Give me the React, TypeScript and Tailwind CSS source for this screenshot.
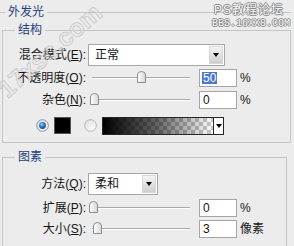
import React from "react";

// Photoshop "外发光" layer style panel (XP look)

const Key = ({ c }: { c: string }) => <span className="underline underline-offset-[1px]">{c}</span>;

const Label = ({ name, k }: { name: string; k: string }) => (
  <div className="w-[83px] shrink-0 flex justify-end whitespace-nowrap">
    <span>
      {name}(<Key c={k} />):
    </span>
  </div>
);

const Arrow = () => (
  <div className="w-0 h-0 border-x-[3px] border-t-[4px] border-x-transparent border-t-black" />
);

const Dropdown = ({ value, width }: { value: string; width: string }) => (
  <div className={`${width} h-[22px] ml-[2px] shrink-0 flex items-center border border-[#a7a6aa] bg-white`}>
    <span className="pl-[6px]">{value}</span>
    <div className="ml-auto mr-[1px] w-[14px] h-[18px] flex items-center justify-center bg-linear-to-b from-[#f4f4f4] to-[#cfcfcf] border border-[#d8d8d8]">
      <Arrow />
    </div>
  </div>
);

const Slider = ({ at }: { at: number }) => (
  <div className="relative w-[104px] h-[14px] ml-[2px] shrink-0">
    <div className="absolute left-[4px] w-[98px] top-[6px] h-[2px] border-t border-t-[#a9a9a9] border-b border-b-white" />
    <svg style={{ left: at }} className="absolute top-0" width="9" height="12" viewBox="0 0 9 12">
      <defs>
        <linearGradient id="thumb" x1="0" y1="0" x2="1" y2="0">
          <stop offset="0" stopColor="#ffffff" />
          <stop offset="1" stopColor="#d6d6d6" />
        </linearGradient>
      </defs>
      <path d="M0.5 4 Q0.5 0.5 4.5 0.5 Q8.5 0.5 8.5 4 V11.5 H0.5 Z" fill="url(#thumb)" stroke="#8c8c8c" />
    </svg>
  </div>
);

const NumBox = ({ value, selected }: { value: string; selected?: boolean }) => (
  <div className="ml-[7px] w-[38px] h-[18px] shrink-0 flex items-center border border-[#a5a5a5] bg-white pl-[2px]">
    <span className={selected ? "bg-[#4a79cc] text-white px-[1px]" : "px-[1px]"}>{value}</span>
  </div>
);

const SliderRow = ({ name, k, at, value, unit, selected, className }: {
  name: string; k: string; at: number; value: string; unit: string; selected?: boolean; className: string;
}) => (
  <div className={`flex items-center h-[18px] ${className}`}>
    <Label name={name} k={k} />
    <Slider at={at} />
    <NumBox value={value} selected={selected} />
    <span className="ml-[3px]">{unit}</span>
  </div>
);

const Radio = ({ on }: { on?: boolean }) => (
  <svg width="13" height="13" viewBox="0 0 13 13" className="shrink-0">
    <defs>
      <radialGradient id="dot" cx="0.4" cy="0.35" r="0.7">
        <stop offset="0" stopColor="#9fd0f5" />
        <stop offset="0.5" stopColor="#2f78c0" />
        <stop offset="1" stopColor="#14477f" />
      </radialGradient>
      <linearGradient id="rfill" x1="0" y1="0" x2="1" y2="1">
        <stop offset="0" stopColor="#dcdcdc" />
        <stop offset="1" stopColor="#ffffff" />
      </linearGradient>
    </defs>
    <circle cx="6.5" cy="6.5" r="5.8" fill="url(#rfill)" stroke={on ? "#7b93ab" : "#b4b4b4"} />
    {on && <circle cx="6.5" cy="6.5" r="3.4" fill="url(#dot)" />}
  </svg>
);

export default function App() {
  return (
    <div className="relative w-[294px] h-[246px] overflow-hidden bg-[#ececec] pt-[6px] text-[12px] leading-[12px] text-[#141414] font-['Liberation_Sans','Noto_Sans_CJK_SC',sans-serif]">
      <fieldset className="mr-[4px] border-t border-t-[#c4c4c4] p-0">
        <legend className="ml-[5px] px-[3px] text-[#23407e] leading-[12px]">外发光</legend>

        {/* 结构 */}
        <fieldset className="ml-[2px] mt-[6px] w-[289px] border border-[#c4c4c4] p-0 pb-[8px]">
          <legend className="ml-[12px] px-[3px] text-[#23407e] leading-[12px]">结构</legend>

          <div className="flex items-center h-[22px] mt-[8px]">
            <Label name="混合模式" k="E" />
            <Dropdown value="正常" width="w-[137px]" />
          </div>

          <SliderRow className="mt-[3px]" name="不透明度" k="O" at={49} value="50" unit="%" selected />
          <SliderRow className="mt-[4px]" name="杂色" k="N" at={2} value="0" unit="%" />

          <div className="flex items-center h-[17px] mt-[8px]">
            <div className="ml-[33px]"><Radio on /></div>
            <div className="ml-[5px] w-[17px] h-[17px] bg-black border border-[#555]" />
            <div className="ml-[13px]"><Radio /></div>
            <div className="ml-[5px] w-[122px] h-[18px] flex border border-[#262626]">
              <div className="relative flex-1 bg-[repeating-conic-gradient(#c9c9c9_0_25%,#ffffff_0_50%)] bg-[length:8px_8px]">
                <div className="absolute inset-0 bg-linear-to-r from-black via-black/60 to-transparent" />
              </div>
              <div className="w-[10px] flex items-center justify-center border-l border-[#262626] bg-white">
                <Arrow />
              </div>
            </div>
          </div>
        </fieldset>

        {/* 图素 */}
        <fieldset className="ml-[2px] mt-[8px] w-[285px] border border-[#c4c4c4] p-0 pb-[20px]">
          <legend className="ml-[12px] px-[3px] text-[#23407e] leading-[12px]">图素</legend>

          <div className="flex items-center h-[22px] mt-[10px]">
            <Label name="方法" k="Q" />
            <Dropdown value="柔和" width="w-[70px]" />
          </div>

          <SliderRow className="mt-[4px]" name="扩展" k="P" at={1} value="0" unit="%" />
          <SliderRow className="mt-[3px]" name="大小" k="S" at={5} value="3" unit="像素" />
        </fieldset>
      </fieldset>

      {/* watermarks */}
      <span className="pointer-events-none absolute left-[10px] top-[77px] origin-bottom-left -rotate-[41deg] whitespace-nowrap text-[25px] leading-[25px] font-bold font-['Liberation_Sans',sans-serif] text-[#e6e6e6]/40 [-webkit-text-stroke:0.7px_#c4c4c4]">
        17xsc.com
      </span>
      <div className="pointer-events-none absolute right-[10px] top-[4px] text-[12px] leading-[12px] tracking-[1px] text-[#f6f6f6] [text-shadow:1px_0_#8a8a8a,-1px_0_#8a8a8a,0_1px_#8a8a8a,0_-1px_#8a8a8a]">
        PS教程论坛
      </div>
      <div className="pointer-events-none absolute right-[4px] top-[18px] text-[10px] leading-[11px] font-['Liberation_Mono',monospace] text-[#f6f6f6] [text-shadow:1px_0_#8a8a8a,-1px_0_#8a8a8a,0_1px_#8a8a8a,0_-1px_#8a8a8a]">
        BBS.16XX8.COM
      </div>
    </div>
  );
}
